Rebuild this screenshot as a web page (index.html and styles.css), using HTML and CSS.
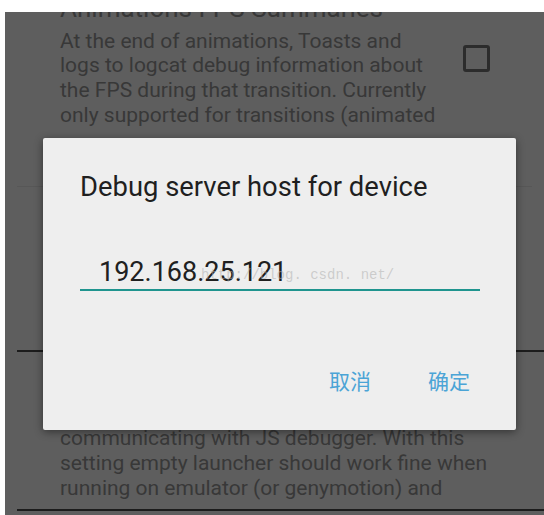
FILE: index.html
```html
<!DOCTYPE html>
<html>
<head>
<meta charset="utf-8">
<link rel="stylesheet" href="styles.css">
</head>
<body>
<div class="screen">
  <div class="pref pref-first">
    <div class="pref-title">Animations FPS Summaries</div>
    <div class="pref-row">
      <div class="pref-desc">At the end of animations, Toasts and<br>logs to logcat debug information about<br>the FPS during that transition. Currently<br>only supported for transitions (animated</div>
      <div class="checkbox"></div>
    </div>
  </div>
  <div class="divider divider-light"></div>
  <div class="pref pref-hidden"></div>
  <div class="divider divider-dark"></div>
  <div class="pref pref-second">
    <div class="pref-desc pref-desc-2">communicating with JS debugger. With this<br>setting empty launcher should work fine when<br>running on emulator (or genymotion) and</div>
  </div>
  <div class="divider divider-dark divider-bottom"></div>

  <div class="dialog">
    <div class="dialog-title">Debug server host for device</div>
    <div class="field">
      <span class="field-value">192.168.25.121</span>
    </div>
    <div class="dialog-actions">
      <span class="btn">取消</span>
      <span class="btn">确定</span>
    </div>
  </div>
  <div class="watermark">http://blog. csdn. net/</div>
</div>
</body>
</html>
```
FILE: styles.css
```css
html, body {
  margin: 0;
  padding: 0;
  background: #ffffff;
}

body {
  font-family: Roboto, "Noto Sans", "Noto Sans CJK SC", sans-serif;
}

.screen {
  position: relative;
  margin: 12px 0 0 5px;
  height: 503px;
  background: #5e5e5e;
  overflow: hidden;
  color: #383838;
}

.pref {
  padding-left: 55px;
}

.pref-title {
  font-size: 26px;
  line-height: 30px;
  margin-top: -18.7px;
  white-space: nowrap;
}

.pref-row {
  display: flex;
  align-items: flex-start;
  margin-top: 5.2px;
}

.pref-desc {
  font-size: 21px;
  line-height: 24.8px;
  white-space: nowrap;
}

.checkbox {
  width: 21px;
  height: 21px;
  border: 3px solid #2c2c2c;
  border-radius: 3px;
  margin-left: auto;
  margin-right: 54px;
  margin-top: 16.5px;
  flex-shrink: 0;
}

.divider {
  margin-left: 12px;
}

.divider-light {
  height: 1px;
  background: #575757;
  margin-top: 58px;
  margin-right: 12px;
}

.pref-hidden {
  height: 163px;
}

.divider-dark {
  height: 2px;
  background: #1c1c1c;
}

.pref-second {
  padding-top: 74px;
}

.pref-desc-2 {
  line-height: 25px;
}

.divider-bottom {
  margin-top: 8px;
}

.dialog {
  position: absolute;
  left: 38px;
  top: 126px;
  width: 473px;
  height: 292px;
  box-sizing: border-box;
  padding: 33px 36px 0 37px;
  background: #eeeeee;
  border-radius: 2px;
  box-shadow: 0 2px 8px rgba(0, 0, 0, 0.45);
  color: #1f1f1f;
}

.dialog-title {
  font-size: 27.4px;
  line-height: 32px;
}

.field {
  margin-top: 52.8px;
  padding: 0 0 1px 19px;
  border-bottom: 2px solid #1f948e;
}

.field-value {
  font-size: 27px;
  line-height: 32px;
  color: #202020;
}

.dialog-actions {
  display: flex;
  justify-content: flex-end;
  gap: 57px;
  margin-top: 77px;
  padding-right: 10px;
}

.btn {
  font-family: "Noto Sans CJK SC", sans-serif;
  font-size: 21px;
  line-height: 24px;
  color: #4ba4d6;
}

.watermark {
  position: absolute;
  left: 196px;
  top: 254px;
  font-family: "Liberation Mono", monospace;
  font-size: 14px;
  line-height: 18px;
  color: rgba(175, 175, 175, 0.55);
  white-space: nowrap;
}
```
